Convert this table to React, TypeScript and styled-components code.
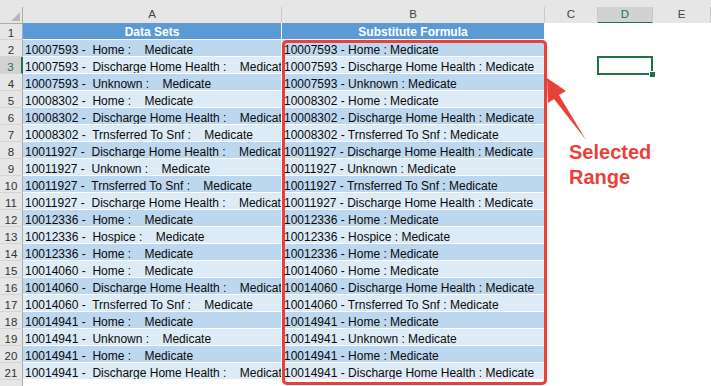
import React from 'react';
import styled, { createGlobalStyle, css } from 'styled-components';

const GlobalStyle = createGlobalStyle`
  html, body {
    margin: 0;
    padding: 0;
    background: #fff;
    overflow: hidden;
  }
  body {
    font-family: "Liberation Sans", Arial, sans-serif;
  }
`;

const COLS = '23px 259px 263px 53px 55px 1fr';
const RED = '#e8413a';
const GREEN = '#217346';

type Tone = 'title' | 'dark' | 'light' | 'blank';

const Sheet = styled.div`
  position: relative;
  width: 711px;
  height: 386px;
  overflow: hidden;
  background: #fff;
`;

const TopStrip = styled.div`
  height: 7px;
  background: #e6e6e6;
`;

const Row = styled.div<{ $height: number }>`
  display: grid;
  grid-template-columns: ${COLS};
  height: ${p => p.$height}px;
`;

const Corner = styled.div`
  position: relative;
  background: #e6e6e6;
  border-right: 1px solid #ababab;
  border-bottom: 1px solid #ababab;

  &::after {
    content: '';
    position: absolute;
    right: 2px;
    bottom: 2px;
    border-left: 9px solid transparent;
    border-bottom: 9px solid #b7b7b7;
  }
`;

const ColHeader = styled.div<{ $active?: boolean }>`
  box-sizing: border-box;
  background: #e6e6e6;
  border-right: 1px solid #c9c9c9;
  border-bottom: 1px solid #ababab;
  color: #444;
  font-size: 11.5px;
  line-height: 15px;
  text-align: center;

  ${p => p.$active && css`
    background: #d2d2d2;
    color: ${GREEN};
    border-bottom: 2px solid ${GREEN};
  `}
`;

const RowHeader = styled.div<{ $active?: boolean }>`
  box-sizing: border-box;
  background: #e6e6e6;
  border-right: 1px solid #ababab;
  border-bottom: 1px solid #d4d4d4;
  color: #333;
  font-size: 11.5px;
  line-height: 12px;
  padding-top: 4px;
  text-align: center;

  ${p => p.$active && css`
    background: #d2d2d2;
    color: ${GREEN};
    border-right: 2px solid ${GREEN};
  `}
`;

const toneBg: Record<Tone, string> = {
  title: '#5b9bd5',
  dark: '#bdd7ee',
  light: '#ddebf7',
  blank: '#fff',
};

const Cell = styled.div<{ $tone: Tone; $active?: boolean }>`
  position: relative;
  box-sizing: border-box;
  min-width: 0;
  overflow: hidden;
  white-space: pre;
  background: ${p => toneBg[p.$tone]};
  border-bottom: 1px solid #fff;
  border-right: 1px solid ${p => (p.$tone === 'blank' ? 'transparent' : '#fff')};
  color: #0a0a0a;
  font-size: 12px;
  line-height: 12px;
  padding: 4px 0 0 2px;

  ${p => p.$tone === 'title' && css`
    color: #fff;
    font-weight: bold;
    text-align: center;
    padding: 3px 0 0;
  `}

  ${p => p.$active && css`
    overflow: visible;
    z-index: 2;

    &::before {
      content: '';
      position: absolute;
      left: -1px;
      top: -1px;
      right: -1px;
      bottom: -2px;
      border: 2px solid ${GREEN};
    }

    &::after {
      content: '';
      position: absolute;
      right: -4px;
      bottom: -5px;
      width: 5px;
      height: 5px;
      background: ${GREEN};
      border: 1px solid #fff;
    }
  `}
`;

const SelectionFrame = styled.div`
  position: absolute;
  left: 282px;
  top: 40px;
  width: 265px;
  height: 345px;
  box-sizing: border-box;
  border: 3px solid ${RED};
  border-radius: 5px;
  box-shadow: 0 0 1px rgba(232, 65, 58, 0.7);
  pointer-events: none;
`;

const Callout = styled.div`
  position: absolute;
  left: 545px;
  top: 76px;
  display: flex;
  flex-direction: column;
`;

const Arrow = styled.svg`
  display: block;
`;

const CalloutLabel = styled.div`
  margin-left: 24px;
  color: ${RED};
  font-size: 20px;
  font-weight: bold;
  line-height: 25px;
`;

const records: [string, string][] = [
  ['10007593', 'Home'],
  ['10007593', 'Discharge Home Health'],
  ['10007593', 'Unknown'],
  ['10008302', 'Home'],
  ['10008302', 'Discharge Home Health'],
  ['10008302', 'Trnsferred To Snf'],
  ['10011927', 'Discharge Home Health'],
  ['10011927', 'Unknown'],
  ['10011927', 'Trnsferred To Snf'],
  ['10011927', 'Discharge Home Health'],
  ['10012336', 'Home'],
  ['10012336', 'Hospice'],
  ['10012336', 'Home'],
  ['10014060', 'Home'],
  ['10014060', 'Discharge Home Health'],
  ['10014060', 'Trnsferred To Snf'],
  ['10014941', 'Home'],
  ['10014941', 'Unknown'],
  ['10014941', 'Home'],
  ['10014941', 'Discharge Home Health'],
];

const columns = ['A', 'B', 'C', 'D', 'E'];
const ACTIVE_ROW = 3;
const ACTIVE_COL = 'D';

export default function App() {
  return (
    <>
      <GlobalStyle />
      <Sheet>
        <TopStrip />
        <Row $height={16}>
          <Corner />
          {columns.map(c => (
            <ColHeader key={c} $active={c === ACTIVE_COL}>{c}</ColHeader>
          ))}
        </Row>

        <Row $height={17}>
          <RowHeader>1</RowHeader>
          <Cell $tone="title">Data Sets</Cell>
          <Cell $tone="title">Substitute Formula</Cell>
          <Cell $tone="blank" />
          <Cell $tone="blank" />
          <Cell $tone="blank" />
        </Row>

        {records.map(([id, kind], i) => {
          const n = i + 2;
          const tone: Tone = n % 2 === 0 ? 'dark' : 'light';
          return (
            <Row key={n} $height={17}>
              <RowHeader $active={n === ACTIVE_ROW}>{n}</RowHeader>
              <Cell $tone={tone}>{`${id} -  ${kind} :    Medicate`}</Cell>
              <Cell $tone={tone}>{`${id} - ${kind} : Medicate`}</Cell>
              <Cell $tone="blank" />
              <Cell $tone="blank" $active={n === ACTIVE_ROW} />
              <Cell $tone="blank" />
            </Row>
          );
        })}

        <Row $height={17}>
          <RowHeader />
          <Cell $tone="blank" />
          <Cell $tone="blank" />
          <Cell $tone="blank" />
          <Cell $tone="blank" />
          <Cell $tone="blank" />
        </Row>

        <SelectionFrame />

        <Callout>
          <Arrow width="46" height="64" viewBox="0 0 46 64">
            <polygon
              points="2,2 21,15 14,19 41,64 9,23 3,27"
              fill={RED}
            />
          </Arrow>
          <CalloutLabel>
            Selected
            <br />
            Range
          </CalloutLabel>
        </Callout>
      </Sheet>
    </>
  );
}
